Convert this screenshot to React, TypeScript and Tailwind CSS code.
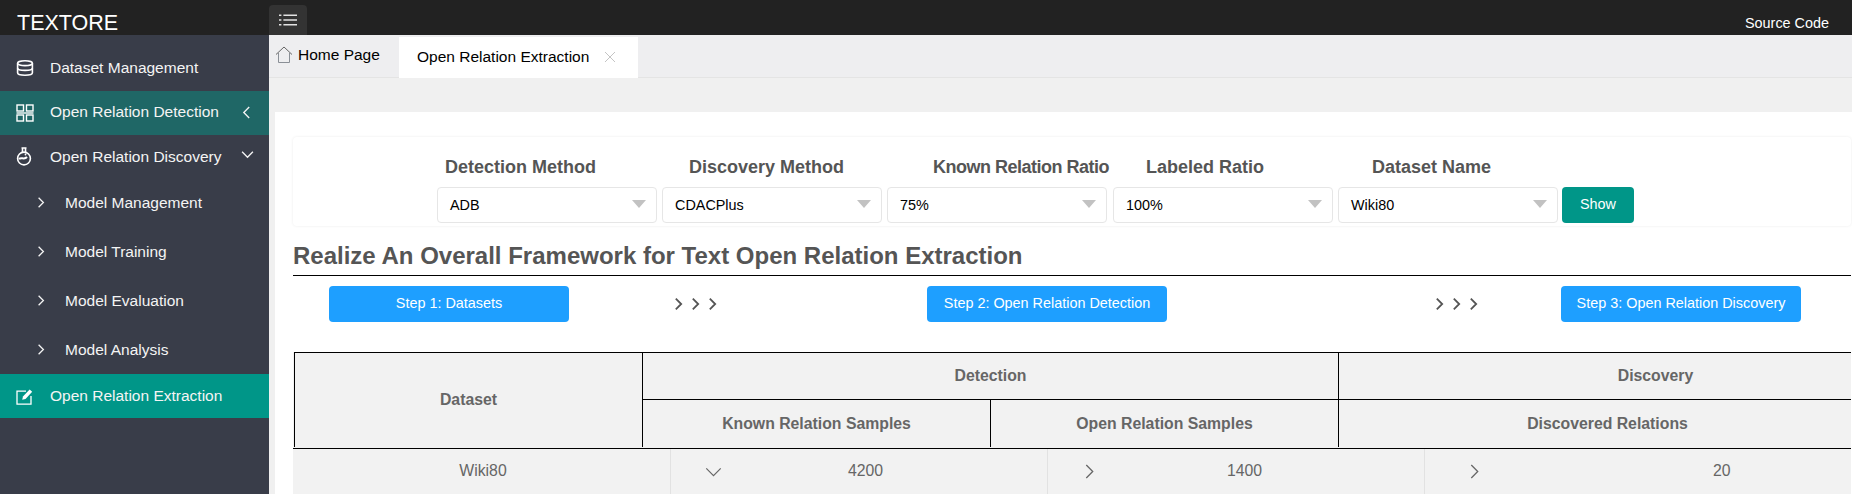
import type { ReactNode } from "react";

function Chevron({ dir, className }: { dir: "left" | "right" | "down"; className: string }) {
  const points = {
    left: "8,1 2,7 8,13",
    right: "2,1 8,7 2,13",
    down: "1,2 7,8 13,2",
  }[dir];
  const box = dir === "down" ? "0 0 14 10" : "0 0 10 14";
  return (
    <svg viewBox={box} className={className} fill="none" stroke="currentColor">
      <polyline points={points} />
    </svg>
  );
}

const DatabaseIcon = () => (
  <svg viewBox="0 0 18 16" className="w-[18px] h-4" fill="none" stroke="currentColor" strokeWidth="1.6">
    <ellipse cx="9" cy="3.2" rx="7.4" ry="2.4" />
    <path d="M1.6 3.2v9.6c0 1.4 3.3 2.4 7.4 2.4s7.4-1 7.4-2.4V3.2" />
    <path d="M1.6 8c0 1.4 3.3 2.4 7.4 2.4s7.4-1 7.4-2.4" />
  </svg>
);

const GridIcon = () => (
  <svg viewBox="0 0 18 18" className="w-[18px] h-[18px]" fill="none" stroke="currentColor" strokeWidth="1.4">
    <rect x="1" y="1" width="6.5" height="6" />
    <rect x="10.5" y="1" width="6.5" height="6" />
    <path d="M0.5 9h17" />
    <rect x="1" y="11" width="6.5" height="6" />
    <rect x="10.5" y="11" width="6.5" height="6" />
  </svg>
);

const FlaskIcon = () => (
  <svg viewBox="0 0 16 19" className="w-4 h-[19px]" fill="none" stroke="currentColor" strokeWidth="1.6">
    <path d="M5.5 1h5M6.5 1v4M9.5 1v4" />
    <circle cx="8" cy="11.5" r="6.4" />
    <path d="M3 12c2.5-2.5 5 1.5 8-2" strokeWidth="2" />
    <circle cx="9.5" cy="7.5" r="0.9" fill="currentColor" stroke="none" />
  </svg>
);

const EditIcon = () => (
  <svg viewBox="0 0 18 17" className="w-[18px] h-[17px]" fill="none" stroke="currentColor" strokeWidth="1.3">
    <path d="M10 3.2H1v13h14V8" />
    <path d="M6.2 11.8 7 8.6 13.6 1.4l2.6 2.3-6.7 7.2z" fill="currentColor" stroke="none" />
  </svg>
);

const HomeIcon = () => (
  <svg viewBox="0 0 18 17" className="w-[18px] h-[17px]" fill="none" strokeWidth="1">
    <path d="M1 8.5 9 1l8 7.5" stroke="#666" />
    <path d="M3.5 7v9.5h11V7" stroke="#8a8f96" />
  </svg>
);

const MenuIcon = () => (
  <svg viewBox="0 0 18 12" className="w-[18px] h-3" fill="none" stroke="#e2e2e2" strokeWidth="1.6">
    <path d="M0 1.2h2.4M0 6h2.4M0 10.8h2.4" />
    <path d="M4.4 1.2H18M4.4 6H18M4.4 10.8H18" />
  </svg>
);

function SideRow({ icon, label, className, labelClass, right }: { icon: ReactNode; label: string; className: string; labelClass?: string; right?: ReactNode }) {
  return (
    <div className={`flex items-center text-[15.5px] text-[#f4f4f4] ${className}`}>
      <span className="w-[50px] pl-4 flex items-center shrink-0">{icon}</span>
      <span className={`flex-1 ${labelClass ?? ""}`}>{label}</span>
      {right}
    </div>
  );
}

function SubRow({ label }: { label: string }) {
  return (
    <div className="flex items-center h-[49px] text-[15.5px] text-[#f4f4f4]">
      <Chevron dir="right" className="w-[8px] h-[13px] ml-[37px] mr-[20px] stroke-[1.6]" />
      <span>{label}</span>
    </div>
  );
}

function FilterSelect({ value, className }: { value: string; className?: string }) {
  return (
    <div className={`w-[220px] h-9 flex items-center justify-between bg-white border border-[#e6e6e6] rounded-sm pl-3 pr-[10px] text-[14.4px] text-black ${className ?? ""}`}>
      <span className="pt-px">{value}</span>
      <span className="w-0 h-0 border-x-[7px] border-x-transparent border-t-[8px] border-t-[#c2c2c2] -mt-0.5" />
    </div>
  );
}

const StepButton = ({ label, className }: { label: string; className: string }) => (
  <button className={`w-[240px] h-9 shrink-0 rounded-sm bg-[#1e9fff] text-white text-[14.4px] ${className}`}>
    {label}
  </button>
);

const Arrows = ({ className }: { className: string }) => (
  <div className={`flex gap-[8px] shrink-0 text-[#555] ${className}`}>
    <Chevron dir="right" className="w-[9px] h-[14px] stroke-2" />
    <Chevron dir="right" className="w-[9px] h-[14px] stroke-2" />
    <Chevron dir="right" className="w-[9px] h-[14px] stroke-2" />
  </div>
);

export default function App() {
  return (
    <div className="w-[1852px] h-[494px] overflow-hidden flex flex-col bg-[#f0f0f0] font-['Liberation_Sans',Arial,sans-serif]">
      <header className="h-[35px] shrink-0 bg-[#222222] flex items-end text-white">
        <div className="w-[269px] pl-[17px] text-[21.5px] leading-[23px]">TEXTORE</div>
        <div className="w-[38px] h-[30px] bg-[#333333] rounded-t flex items-center justify-center">
          <MenuIcon />
        </div>
        <div className="ml-auto mr-[23px] text-[14.4px]">Source Code</div>
      </header>

      <div className="flex flex-1 min-h-0">
        <aside className="w-[269px] shrink-0 bg-[#393d49] pt-[10px]">
          <SideRow icon={<span className="text-white"><DatabaseIcon /></span>} label="Dataset Management" className="h-[46px]" />
          <SideRow
            icon={<span className="text-white"><GridIcon /></span>}
            label="Open Relation Detection"
            className="h-11 bg-[#1f6766]"
            labelClass="-mt-[2px]"
            right={<Chevron dir="left" className="w-[9px] h-[13px] mr-[18px] -mt-0.5 stroke-[1.5]" />}
          />
          <SideRow
            icon={<span className="text-white"><FlaskIcon /></span>}
            label="Open Relation Discovery"
            className="h-[43px]"
            right={<Chevron dir="down" className="w-[13px] h-[9px] mr-[15px] -mt-1 stroke-[1.5]" />}
          />
          <SubRow label="Model Management" />
          <SubRow label="Model Training" />
          <SubRow label="Model Evaluation" />
          <SubRow label="Model Analysis" />
          <SideRow icon={<span className="text-white"><EditIcon /></span>} label="Open Relation Extraction" className="h-11 bg-[#009688]" />
        </aside>

        <main className="flex-1 min-w-0 flex flex-col">
          <div className="h-[43px] shrink-0 bg-[#eeeef0] border-b border-[#e4e4e4] flex items-end text-[15.5px] text-black">
            <div className="w-[130px] h-[42px] flex items-center gap-[5px] pl-[6px] pb-[3px]">
              <HomeIcon />
              <span>Home Page</span>
            </div>
            <div className="w-[239px] h-[41px] -mb-px bg-white flex items-center pl-[18px] pb-[2px]">
              <span>Open Relation Extraction</span>
              <svg viewBox="0 0 12 12" className="w-3 h-3 ml-[15px]" stroke="#c4c4c4" strokeWidth="1">
                <path d="M1 1l10 10M11 1 1 11" />
              </svg>
            </div>
          </div>

          <div className="flex-1 ml-[6px] mt-[34px] bg-white pl-[18px] pr-px pt-[25px] overflow-hidden">
            <section className="h-[89px] rounded shadow-[0_0_3px_rgba(0,0,0,0.08)] pl-[144px] pt-[19px]">
              <div className="flex text-[18px] font-bold text-[#555555] leading-[22px] whitespace-nowrap">
                <div className="w-[225px] pl-2">Detection Method</div>
                <div className="w-[225px] pl-[27px]">Discovery Method</div>
                <div className="w-[226px] pl-[46px] tracking-[-0.5px]">Known Relation Ratio</div>
                <div className="w-[225px] pl-[33px]">Labeled Ratio</div>
                <div className="pl-[34px]">Dataset Name</div>
              </div>
              <div className="flex gap-[5px] mt-[9px]">
                <FilterSelect value="ADB" />
                <FilterSelect value="CDACPlus" />
                <FilterSelect value="75%" className="mr-px" />
                <FilterSelect value="100%" />
                <FilterSelect value="Wiki80" />
                <button className="w-[72px] h-9 -ml-px rounded-sm bg-[#009688] text-white text-[14.4px]">Show</button>
              </div>
            </section>

            <h1 className="mt-[14px] h-[36px] leading-[32px] border-b border-black text-[24px] font-bold text-[#555555]">
              Realize An Overall Framework for Text Open Relation Extraction
            </h1>

            <div className="flex items-center mt-[10px]">
              <StepButton label="Step 1: Datasets" className="ml-[36px]" />
              <Arrows className="ml-[105px]" />
              <StepButton label="Step 2: Open Relation Detection" className="ml-[210px]" />
              <Arrows className="ml-[268px]" />
              <StepButton label="Step 3: Open Relation Discovery" className="ml-[83px]" />
            </div>

            <div className="mt-[30px] bg-[#f2f2f2] text-[15.8px] text-[#666666]">
              <div className="ml-px grid grid-cols-[348px_348px_348px_513px] grid-rows-[47px_47px] border-t border-black font-bold">
                <div className="row-span-2 border-l border-black flex items-center justify-center">Dataset</div>
                <div className="col-span-2 border-l border-b border-black flex items-center justify-center">Detection</div>
                <div className="border-l border-b border-black flex items-center justify-center pl-[121px]">Discovery</div>
                <div className="border-l border-black flex items-center justify-center">Known Relation Samples</div>
                <div className="border-l border-black flex items-center justify-center">Open Relation Samples</div>
                <div className="border-l border-black flex items-center justify-center pl-[25px]">Discovered Relations</div>
              </div>
              <div className="mt-px h-[47px] border-t border-black flex">
                <div className="w-[377px] flex items-center justify-center pl-[3px] pb-[2px]">Wiki80</div>
                <div className="w-[377px] flex items-center border-l border-[#e2e2e2] pl-[34px] pb-[2px]">
                  <Chevron dir="down" className="w-[17px] h-[12px] stroke-1 mt-0.5" />
                  <span className="ml-[126px]">4200</span>
                </div>
                <div className="w-[377px] flex items-center border-l border-[#e2e2e2] pl-[36px] pb-[2px]">
                  <Chevron dir="right" className="w-[11px] h-[15px] stroke-[1.2]" />
                  <span className="ml-[132px]">1400</span>
                </div>
                <div className="flex-1 flex items-center border-l border-[#e2e2e2] pl-[44px] pb-[2px]">
                  <Chevron dir="right" className="w-[11px] h-[15px] stroke-[1.2]" />
                  <span className="ml-[233px]">20</span>
                </div>
              </div>
            </div>
          </div>
        </main>
      </div>
    </div>
  );
}
